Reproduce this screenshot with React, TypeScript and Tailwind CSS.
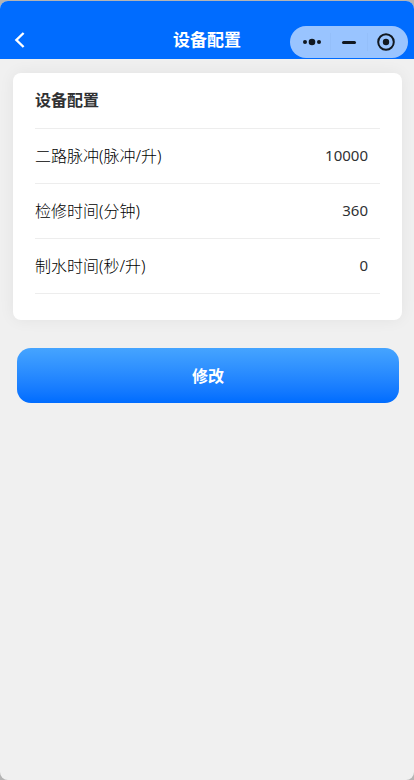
const settings = [
  { id: 'pulse', label: '二路脉冲(脉冲/升)', value: '10000' },
  { id: 'service', label: '检修时间(分钟)', value: '360' },
  { id: 'water', label: '制水时间(秒/升)', value: '0' },
];

function Header() {
  return (
    <header className="grid h-[58px] grid-cols-3 items-end bg-[#006cff] px-1.5">
      <button type="button" aria-label="返回" className="mb-[5px] flex size-7 items-center justify-center">
        <svg width="24" height="24" viewBox="0 0 24 24" fill="none" stroke="#fff" strokeWidth="2.4">
          <path d="M15.6 5 8.4 12l7.2 7" />
        </svg>
      </button>
      <h1 className="mb-[7px] text-center text-[17px] leading-6 font-bold text-white">设备配置</h1>
      <div className="mb-px flex h-8 w-[118px] items-center justify-self-end rounded-full bg-[#99c4ff] px-1">
        <button type="button" aria-label="更多" className="flex flex-1 justify-center">
          <svg width="20" height="20" viewBox="0 0 20 20" fill="#111820">
            <circle cx="3" cy="10" r="2" />
            <circle cx="10" cy="10" r="3.3" />
            <circle cx="17" cy="10" r="2" />
          </svg>
        </button>
        <span className="h-[18px] w-px bg-[#94bffa]" />
        <button type="button" aria-label="最小化" className="flex flex-1 justify-center">
          <svg width="20" height="20" viewBox="0 0 20 20" fill="#111820">
            <rect x="3" y="9" width="14" height="3" rx="1.5" />
          </svg>
        </button>
        <span className="h-[18px] w-px bg-[#94bffa]" />
        <button type="button" aria-label="关闭" className="flex flex-1 justify-center">
          <svg width="20" height="20" viewBox="0 0 20 20" fill="#111820">
            <circle cx="10" cy="10" r="7.8" fill="none" stroke="#111820" strokeWidth="2" />
            <circle cx="10" cy="10" r="3.2" />
          </svg>
        </button>
      </div>
    </header>
  );
}

export default function App() {
  return (
    <div className="min-h-screen bg-[#b4b4b4] pt-px font-['Noto_Sans','Noto_Sans_CJK_SC',sans-serif] text-[#303133]">
      <div className="min-h-[calc(100vh-1px)] overflow-hidden rounded-lg bg-[#f0f0f0]">
        <Header />
        <main className="px-3 pt-3.5">
          <section className="ml-px rounded-lg bg-white px-[22px] pb-[26px] shadow-[0_0_16px_rgba(0,0,0,0.06)]">
            <h2 className="flex h-14 items-center border-b border-[#ededed] pb-0.5 text-base leading-6 font-bold">
              设备配置
            </h2>
            {settings.map((item) => (
              <div key={item.id} className="flex h-[55px] items-center border-b border-[#ededed]">
                <label htmlFor={item.id} className="shrink-0 text-base leading-6 font-light text-black">
                  {item.label}
                </label>
                <input
                  id={item.id}
                  readOnly
                  defaultValue={item.value}
                  className="h-6 min-w-0 flex-1 bg-transparent pr-3 pb-0.5 text-right text-[15px] outline-none"
                />
              </div>
            ))}
          </section>
          <div className="mt-7 pr-[3px] pl-[5px]">
            <button
              type="button"
              className="h-[55px] w-full rounded-[14px] bg-linear-to-b from-[#45a4ff] to-[#006cff] text-base font-bold text-white"
            >
              修改
            </button>
          </div>
        </main>
      </div>
    </div>
  );
}
